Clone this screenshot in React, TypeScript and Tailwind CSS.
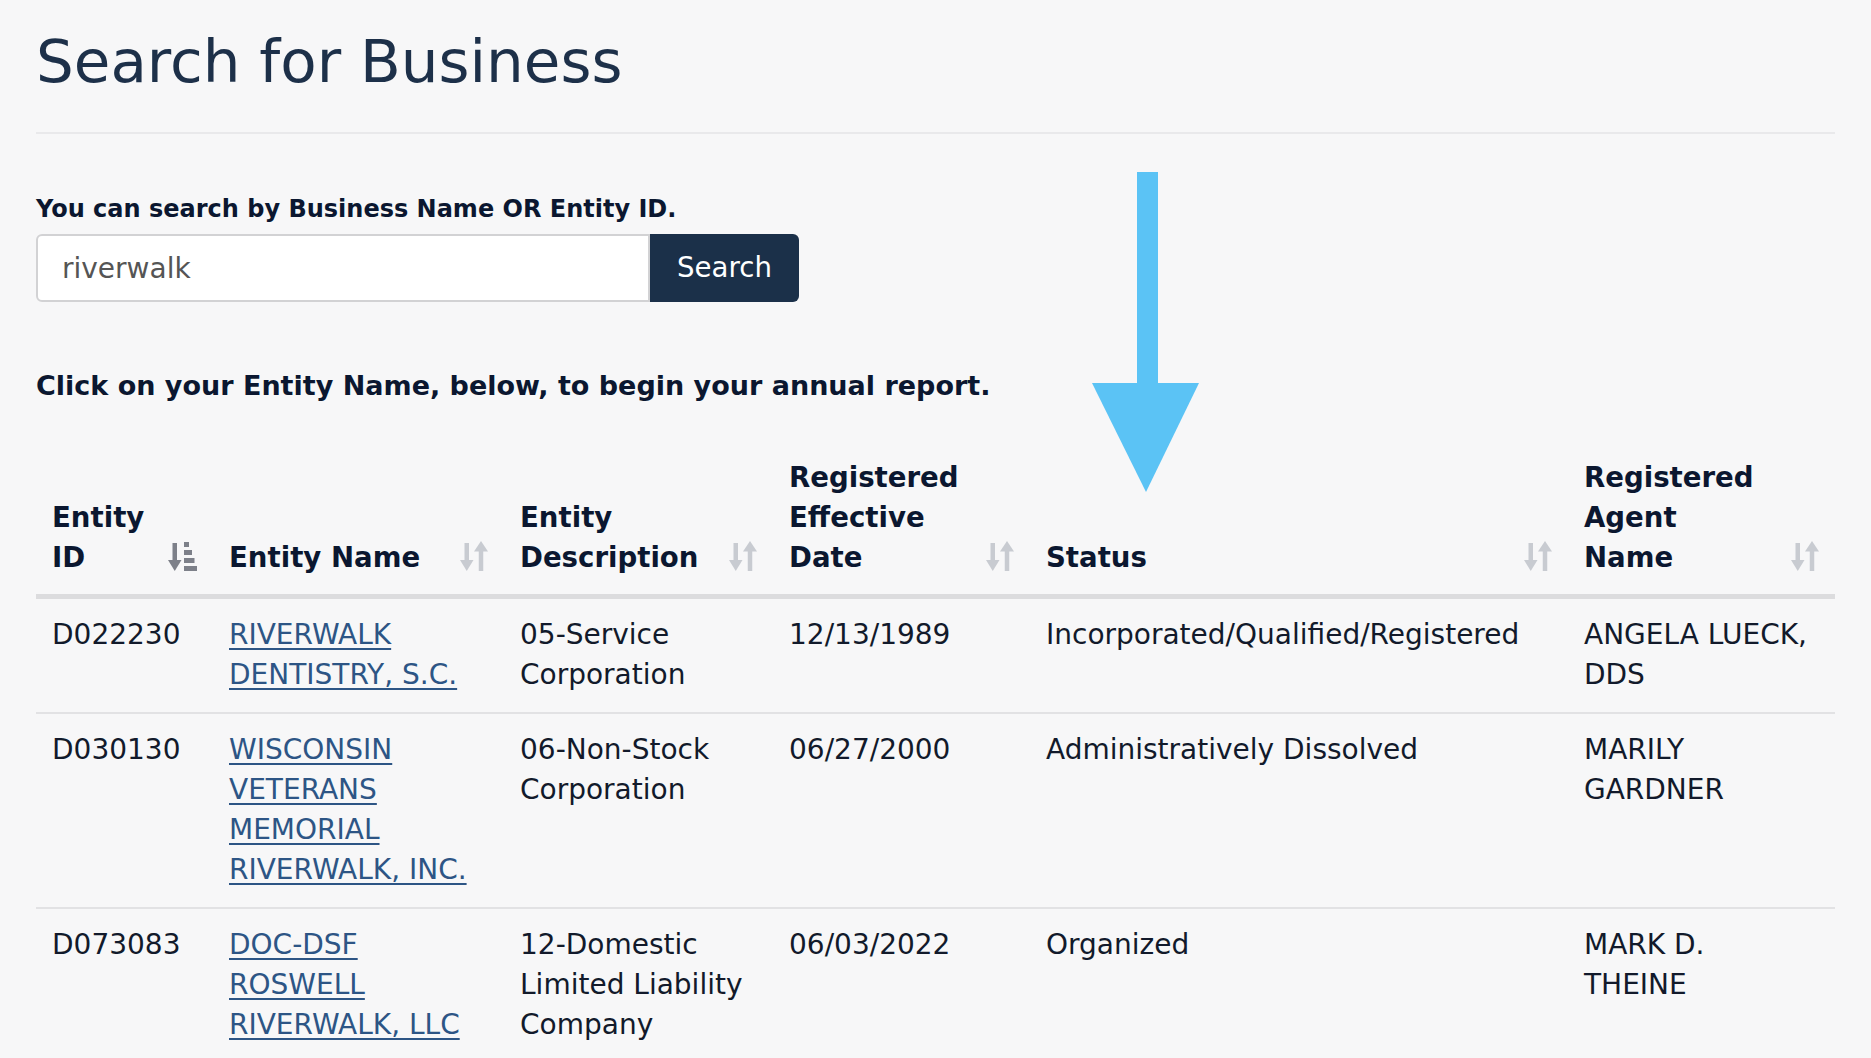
import React from 'react';

type Row = {
  id: string;
  name: string;
  description: string;
  date: string;
  status: string;
  agent: string;
};

const ROWS: Row[] = [
  {
    id: 'D022230',
    name: 'RIVERWALK DENTISTRY, S.C.',
    description: '05-Service Corporation',
    date: '12/13/1989',
    status: 'Incorporated/Qualified/Registered',
    agent: 'ANGELA LUECK, DDS',
  },
  {
    id: 'D030130',
    name: 'WISCONSIN VETERANS MEMORIAL RIVERWALK, INC.',
    description: '06-Non-Stock Corporation',
    date: '06/27/2000',
    status: 'Administratively Dissolved',
    agent: 'MARILY GARDNER',
  },
  {
    id: 'D073083',
    name: 'DOC-DSF ROSWELL RIVERWALK, LLC',
    description: '12-Domestic Limited Liability Company',
    date: '06/03/2022',
    status: 'Organized',
    agent: 'MARK D. THEINE',
  },
];

function SortIcon() {
  return (
    <svg width="28" height="30" viewBox="0 0 28 30" className="mb-[7px] shrink-0" fill="#c8cbd1">
      <rect x="4.5" y="2" width="4.5" height="19" />
      <polygon points="0,19 13.5,19 6.75,30" />
      <polygon points="14,10.5 28,10.5 21,0" />
      <rect x="18.75" y="10" width="4.5" height="20" />
    </svg>
  );
}

function SortedIcon() {
  return (
    <svg width="29" height="30" viewBox="0 0 29 30" className="mb-[7px] shrink-0" fill="#7d8089">
      <rect x="4.5" y="2" width="4.5" height="19" />
      <polygon points="0,19 13.5,19 6.75,30" />
      <rect x="16" y="1" width="5" height="5" />
      <rect x="16" y="9" width="8" height="5" />
      <rect x="16" y="17" width="10.5" height="5" />
      <rect x="16" y="25" width="13" height="5" />
    </svg>
  );
}

function HeaderCell({ lines, sorted }: { lines: string[]; sorted?: boolean }) {
  return (
    <th className="border-b-[5px] border-[#dcdcde] px-4 py-4 text-left align-bottom font-bold">
      <div className="flex items-end justify-between gap-2">
        <span>
          {lines.map((l, i) => (
            <React.Fragment key={l}>
              {i > 0 && <br />}
              {l}
            </React.Fragment>
          ))}
        </span>
        {sorted ? <SortedIcon /> : <SortIcon />}
      </div>
    </th>
  );
}

export default function App() {
  return (
    <div className="relative min-h-screen bg-[#f7f7f8] px-[36px] pt-[29px] font-['DejaVu_Sans',Verdana,sans-serif]">
      <h1 className="text-[59.5px] leading-[66px] font-normal text-[#1d3049]">Search for Business</h1>
      <div className="mt-[37px] border-t-2 border-[#e9e9eb]" />

      <p className="mt-[58px] text-[24px] leading-[34px] font-bold text-[#0b1730]">
        You can search by Business Name OR Entity ID.
      </p>
      <div className="mt-[8px] flex h-[68px] w-[763px]">
        <input
          defaultValue="riverwalk"
          className="h-full w-[614px] rounded-l-[6px] border-2 border-[#d2d2d4] bg-white pl-[24px] text-[28px] text-[#555] outline-none"
        />
        <button
          type="button"
          className="h-full w-[149px] rounded-r-[6px] bg-[#1b3049] text-[27.6px] text-white"
        >
          Search
        </button>
      </div>

      <p className="mt-[64px] text-[27px] leading-[40px] font-bold text-[#0b1730]">
        Click on your Entity Name, below, to begin your annual report.
      </p>

      <table className="mt-[36px] w-full table-fixed border-separate border-spacing-0 text-[27.6px] leading-[40px]">
        <colgroup>
          <col className="w-[177px]" />
          <col className="w-[291px]" />
          <col className="w-[269px]" />
          <col className="w-[257px]" />
          <col className="w-[538px]" />
          <col className="w-[267px]" />
        </colgroup>
        <thead className="text-[#0b1730]">
          <tr>
            <HeaderCell lines={['Entity', 'ID']} sorted />
            <HeaderCell lines={['Entity Name']} />
            <HeaderCell lines={['Entity', 'Description']} />
            <HeaderCell lines={['Registered', 'Effective', 'Date']} />
            <HeaderCell lines={['Status']} />
            <HeaderCell lines={['Registered', 'Agent', 'Name']} />
          </tr>
        </thead>
        <tbody className="text-[28px] text-[#121a2b]">
          {ROWS.map((r) => (
            <tr key={r.id}>
              <td className="border-b-2 border-[#e2e2e4] px-4 pt-4 pb-[17px] align-top">{r.id}</td>
              <td className="border-b-2 border-[#e2e2e4] px-4 pt-4 pb-[17px] align-top">
                <a href="#" className="text-[#2d5585] underline decoration-2 underline-offset-[4px]">
                  {r.name}
                </a>
              </td>
              <td className="border-b-2 border-[#e2e2e4] px-4 pt-4 pb-[17px] align-top">{r.description}</td>
              <td className="border-b-2 border-[#e2e2e4] px-4 pt-4 pb-[17px] align-top">{r.date}</td>
              <td className="border-b-2 border-[#e2e2e4] px-4 pt-4 pb-[17px] align-top">{r.status}</td>
              <td className="border-b-2 border-[#e2e2e4] pt-4 pr-[26px] pb-[17px] pl-4 align-top">{r.agent}</td>
            </tr>
          ))}
        </tbody>
      </table>

      <svg
        className="absolute top-[172px] left-[1092px]"
        width="107"
        height="320"
        viewBox="0 0 107 320"
        fill="#5bc3f5"
      >
        <rect x="45" y="0" width="21" height="213" />
        <polygon points="0,211 107,211 54,320" />
      </svg>
    </div>
  );
}
